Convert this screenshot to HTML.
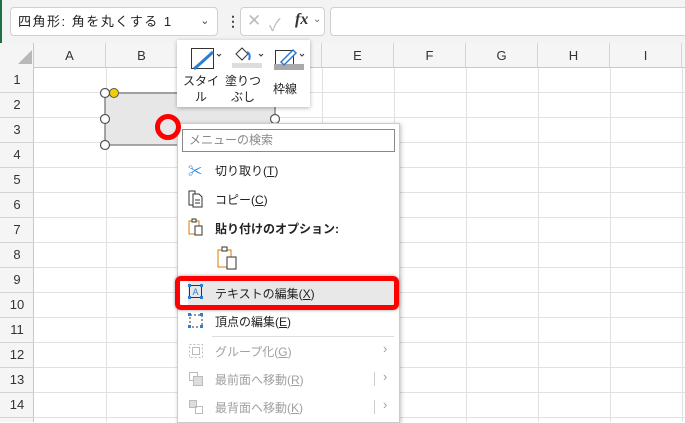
<!DOCTYPE html>
<html><head><meta charset="utf-8"><style>
*{margin:0;padding:0;box-sizing:border-box}
body{width:685px;height:422px;overflow:hidden;background:#fff;font-family:"Liberation Sans","Noto Sans CJK JP",sans-serif;position:relative}
.abs{position:absolute}
.col{position:absolute;top:43px;height:25px;font-size:13px;color:#333;text-align:center;line-height:25px;border-right:1px solid #d4d4d4}
.row{position:absolute;left:0;width:34px;font-size:13px;color:#333;text-align:center;border-bottom:1px solid #d4d4d4}
.mi{position:absolute;left:215px;font-size:12px;color:#222;white-space:nowrap}
.dis{color:#a0a0a0}
.ic{position:absolute;left:188px}
</style></head><body>
<div class="abs" style="left:0;top:0;width:685px;height:43px;background:#f3f3f3"></div>
<div class="abs" style="left:0;top:0;width:2px;height:422px;background:#1e7145"></div>
<div class="abs" style="left:10px;top:7px;width:208px;height:29px;background:#fff;border:1px solid #d0d0d0;border-radius:4px;font-size:13px;line-height:27px;padding-left:7px;color:#222;letter-spacing:1.5px;white-space:nowrap">四角形: 角を丸くする 1<span style="position:absolute;right:6px;font-size:11px;color:#444">&#8964;</span></div>
<div class="abs" style="left:226px;top:13px;font-size:14px;color:#444;font-weight:bold">⋮</div>
<div class="abs" style="left:240px;top:7px;width:85px;height:29px;background:#fff;border:1px solid #d0d0d0;border-radius:4px">
<span class="abs" style="left:6px;top:3px;font-size:17px;color:#bbb">✕</span>
<span class="abs" style="left:28px;top:3px;font-size:17px;color:#bbb">✓</span>
<span class="abs" style="left:54px;top:3px;font-size:16px;color:#333;font-style:italic;font-family:'Liberation Serif',serif;font-weight:bold">fx</span>
<span class="abs" style="left:72px;top:6px;font-size:10px;color:#666">&#8964;</span></div>
<div class="abs" style="left:330px;top:7px;width:360px;height:29px;background:#fff;border:1px solid #d0d0d0;border-radius:4px"></div>
<div class="abs" style="left:0;top:43px;width:685px;height:25px;background:#f5f5f5;border-bottom:1px solid #c8c8c8"></div>
<div class="abs" style="left:0;top:43px;width:34px;height:379px;background:#f5f5f5;border-right:1px solid #c8c8c8"></div>
<svg class="abs" style="left:18px;top:50px" width="14" height="14"><polygon points="14,0 14,14 0,14" fill="#b8b8b8"/></svg>
<div class="col" style="left:34px;width:72px">A</div>
<div class="col" style="left:106px;width:72px">B</div>
<div class="col" style="left:178px;width:72px">C</div>
<div class="col" style="left:250px;width:72px">D</div>
<div class="col" style="left:322px;width:72px">E</div>
<div class="col" style="left:394px;width:72px">F</div>
<div class="col" style="left:466px;width:72px">G</div>
<div class="col" style="left:538px;width:72px">H</div>
<div class="col" style="left:610px;width:72px">I</div>
<svg class="abs" style="left:34px;top:68px" width="651" height="354">
<g stroke="#e1e1e1" stroke-width="1">
<line x1="72.5" y1="0" x2="72.5" y2="354"/><line x1="144.5" y1="0" x2="144.5" y2="354"/><line x1="216.5" y1="0" x2="216.5" y2="354"/><line x1="288.5" y1="0" x2="288.5" y2="354"/><line x1="360.5" y1="0" x2="360.5" y2="354"/><line x1="432.5" y1="0" x2="432.5" y2="354"/><line x1="504.5" y1="0" x2="504.5" y2="354"/><line x1="576.5" y1="0" x2="576.5" y2="354"/><line x1="648.5" y1="0" x2="648.5" y2="354"/>
<line x1="0" y1="24.5" x2="651" y2="24.5"/><line x1="0" y1="49.5" x2="651" y2="49.5"/><line x1="0" y1="74.5" x2="651" y2="74.5"/><line x1="0" y1="99.5" x2="651" y2="99.5"/><line x1="0" y1="124.5" x2="651" y2="124.5"/><line x1="0" y1="149.5" x2="651" y2="149.5"/><line x1="0" y1="174.5" x2="651" y2="174.5"/><line x1="0" y1="199.5" x2="651" y2="199.5"/><line x1="0" y1="224.5" x2="651" y2="224.5"/><line x1="0" y1="249.5" x2="651" y2="249.5"/><line x1="0" y1="274.5" x2="651" y2="274.5"/><line x1="0" y1="299.5" x2="651" y2="299.5"/><line x1="0" y1="324.5" x2="651" y2="324.5"/><line x1="0" y1="349.5" x2="651" y2="349.5"/>
</g></svg>
<div class="row" style="top:68px;height:25px;line-height:24px">1</div>
<div class="row" style="top:93px;height:25px;line-height:24px">2</div>
<div class="row" style="top:118px;height:25px;line-height:24px">3</div>
<div class="row" style="top:143px;height:25px;line-height:24px">4</div>
<div class="row" style="top:168px;height:25px;line-height:24px">5</div>
<div class="row" style="top:193px;height:25px;line-height:24px">6</div>
<div class="row" style="top:218px;height:25px;line-height:24px">7</div>
<div class="row" style="top:243px;height:25px;line-height:24px">8</div>
<div class="row" style="top:268px;height:25px;line-height:24px">9</div>
<div class="row" style="top:293px;height:25px;line-height:24px">10</div>
<div class="row" style="top:318px;height:25px;line-height:24px">11</div>
<div class="row" style="top:343px;height:25px;line-height:24px">12</div>
<div class="row" style="top:368px;height:25px;line-height:24px">13</div>
<div class="row" style="top:393px;height:25px;line-height:24px">14</div>
<svg class="abs" style="left:0;top:0" width="685" height="422">
<rect x="105" y="93" width="170" height="52" rx="3" fill="#e7e7e7" stroke="#777" stroke-width="1.3"/>
<g fill="#fff" stroke="#555" stroke-width="1.2">
<circle cx="105" cy="93" r="4.5"/><circle cx="105" cy="119" r="4.5"/><circle cx="105" cy="145" r="4.5"/><circle cx="275" cy="119" r="4.5"/></g>
<circle cx="114" cy="93" r="4.5" fill="#f0d000" stroke="#555" stroke-width="1"/>
</svg>
<div class="abs" style="left:177px;top:40px;width:133px;height:67px;background:#fff;box-shadow:0 1px 4px rgba(0,0,0,.3)"></div>
<svg class="abs" style="left:177px;top:40px" width="133" height="67">
<rect x="14.5" y="8.5" width="22" height="20" fill="none" stroke="#333"/>
<path d="M17 29 L25 22 L36 12" stroke="#2b7cd3" stroke-width="3" fill="none"/>
<path d="M40 14 l2 2 l2 -2" stroke="#333" fill="none"/>
<rect x="55" y="23" width="30" height="5" fill="#ddd"/>
<path d="M59 14 l6 -6 l6 6 l-6 6z" stroke="#333" fill="none"/>
<path d="M70 12 q4 2 2 8" stroke="#2b7cd3" stroke-width="2" fill="none"/>
<path d="M82 14 l2 2 l2 -2" stroke="#333" fill="none"/>
<rect x="98.5" y="10.5" width="18" height="17" fill="none" stroke="#333"/>
<rect x="97" y="24" width="30" height="6" fill="#aaa"/>
<path d="M104 22 L116 10 l3 3 L107 25z" stroke="#2b7cd3" stroke-width="1.5" fill="#fff"/>
<path d="M123 14 l2 2 l2 -2" stroke="#333" fill="none"/>
</svg>
<div class="abs" style="left:181px;top:73px;font-size:12px;line-height:16px;text-align:center;width:40px;color:#222;white-space:nowrap">スタイ<br>ル</div>
<div class="abs" style="left:223px;top:73px;font-size:12px;line-height:16px;text-align:center;width:40px;color:#222;white-space:nowrap">塗りつ<br>ぶし</div>
<div class="abs" style="left:273px;top:80px;font-size:12px;color:#222">枠線</div>
<div class="abs" style="left:177px;top:123px;width:223px;height:300px;background:#fff;border:1px solid #ccc;box-shadow:1px 1px 4px rgba(0,0,0,.25)"></div>
<div class="abs" style="left:182px;top:129px;width:213px;height:23px;border:1px solid #888;font-size:12px;color:#888;line-height:21px;padding-left:6px">メニューの検索</div>
<div class="ic" style="top:161px;font-size:14px;color:#2b7cd3">✂</div>
<div class="mi" style="top:162px">切り取り(<u>T</u>)</div>
<svg class="ic" style="top:190px" width="16" height="18"><path d="M1 1h6v14h-6z" fill="none" stroke="#333"/><path d="M5 4h6l3 3v10h-9z" fill="#fff" stroke="#333"/><path d="M7 10h5M7 13h5" stroke="#333"/></svg>
<div class="mi" style="top:191px">コピー(<u>C</u>)</div>
<svg class="ic" style="top:218px" width="16" height="18"><path d="M1 3h10v13h-10z" fill="none" stroke="#d97a00"/><rect x="4" y="1" width="4" height="3" fill="#fff" stroke="#333"/><rect x="7" y="8" width="7" height="9" fill="#fff" stroke="#333"/></svg>
<div class="mi" style="top:220px;font-weight:bold">貼り付けのオプション:</div>
<svg class="abs" style="left:217px;top:246px" width="22" height="24"><path d="M1 4h13v17h-13z" fill="none" stroke="#d97a00"/><rect x="5" y="1" width="5" height="4" fill="#fff" stroke="#333"/><rect x="10" y="11" width="9" height="12" fill="#fff" stroke="#333"/></svg>
<div class="abs" style="left:188px;top:278px;width:206px;height:29px;background:#e8e8e8"></div>
<svg class="ic" style="top:284px" width="16" height="16"><rect x="1.5" y="1.5" width="12" height="12" fill="none" stroke="#333"/><g fill="#2b7cd3"><rect x="0" y="0" width="3" height="3"/><rect x="12" y="0" width="3" height="3"/><rect x="0" y="12" width="3" height="3"/><rect x="12" y="12" width="3" height="3"/></g><text x="4.5" y="11" font-size="9" fill="#2b7cd3" font-family="Liberation Sans">A</text></svg>
<div class="mi" style="top:285px">テキストの編集(<u>X</u>)</div>
<div class="abs" style="left:175px;top:276px;width:224px;height:34px;border:5px solid #f00;border-radius:6px;box-shadow:0 0 3px rgba(0,0,0,.4)"></div>
<svg class="ic" style="top:313px" width="16" height="16"><path d="M2 2h12v12h-12z" fill="none" stroke="#333" stroke-dasharray="2 2"/><g fill="#2b7cd3"><rect x="0" y="0" width="3" height="3"/><rect x="12" y="0" width="3" height="3"/><rect x="0" y="12" width="3" height="3"/><rect x="12" y="12" width="3" height="3"/></g></svg>
<div class="mi" style="top:313px">頂点の編集(<u>E</u>)</div>
<div class="abs" style="left:212px;top:336px;width:182px;height:1px;background:#ddd"></div>
<svg class="ic" style="top:343px" width="16" height="16"><rect x="1.5" y="1.5" width="13" height="13" fill="none" stroke="#bbb" stroke-dasharray="2 2"/><rect x="4.5" y="4.5" width="7" height="7" fill="none" stroke="#bbb"/></svg>
<div class="mi dis" style="top:343px">グループ化(<u>G</u>)</div>
<div class="abs dis" style="left:383px;top:341px;font-size:13px">›</div>
<svg class="ic" style="top:371px" width="16" height="16"><rect x="1.5" y="1.5" width="8" height="8" fill="none" stroke="#bbb"/><rect x="5.5" y="5.5" width="9" height="9" fill="#ddd" stroke="#bbb"/></svg>
<div class="mi dis" style="top:371px">最前面へ移動(<u>R</u>)</div>
<div class="abs" style="left:374px;top:372px;width:1px;height:14px;background:#ccc"></div>
<div class="abs dis" style="left:383px;top:369px;font-size:13px">›</div>
<svg class="ic" style="top:399px" width="16" height="16"><rect x="1.5" y="1.5" width="7" height="7" fill="#ddd" stroke="#bbb"/><rect x="7.5" y="7.5" width="7" height="7" fill="none" stroke="#bbb"/></svg>
<div class="mi dis" style="top:399px">最背面へ移動(<u>K</u>)</div>
<div class="abs" style="left:374px;top:400px;width:1px;height:14px;background:#ccc"></div>
<div class="abs dis" style="left:383px;top:397px;font-size:13px">›</div>
<svg class="abs" style="left:150px;top:108px" width="40" height="40"><circle cx="18" cy="19" r="10.5" fill="none" stroke="#f00" stroke-width="5"/></svg>
</body></html>
